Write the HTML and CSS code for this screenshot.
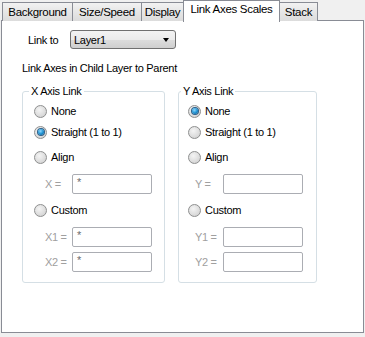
FILE: index.html
```html
<html>
<head>
    <meta charset="UTF-8">
    <title>Link Axes Scales</title>
    <link rel="stylesheet" href="styles.css">
</head>
<body>
    <div class="tabs">
        <div class="tab tab-bg">Background</div>
        <div class="tab tab-size">Size/Speed</div>
        <div class="tab tab-display">Display</div>
        <div class="tab tab-link selected">Link Axes Scales</div>
        <div class="tab tab-stack">Stack</div>
    </div>

    <div class="panel">
        <div class="link-row">
            <span class="link-label">Link to</span>
            <div class="combo">
                <span>Layer1</span>
                <span class="combo-arrow"></span>
            </div>
        </div>

        <div class="caption">Link Axes in Child Layer to Parent</div>

        <div class="groups">
            <fieldset class="group group-x">
                <legend>X Axis Link</legend>
                <div class="row r-none"><span class="radio"></span>None</div>
                <div class="row r-straight"><span class="radio checked"></span>Straight (1 to 1)</div>
                <div class="row r-align"><span class="radio"></span>Align</div>
                <div class="row r-field field"><span class="field-label">X =</span><div class="input">*</div></div>
                <div class="row r-custom"><span class="radio"></span>Custom</div>
                <div class="row r-f1 field"><span class="field-label">X1 =</span><div class="input">*</div></div>
                <div class="row r-f2 field"><span class="field-label">X2 =</span><div class="input">*</div></div>
            </fieldset>

            <fieldset class="group group-y">
                <legend>Y Axis Link</legend>
                <div class="row r-none"><span class="radio checked"></span>None</div>
                <div class="row r-straight"><span class="radio"></span>Straight (1 to 1)</div>
                <div class="row r-align"><span class="radio"></span>Align</div>
                <div class="row r-field field"><span class="field-label">Y =</span><div class="input"></div></div>
                <div class="row r-custom"><span class="radio"></span>Custom</div>
                <div class="row r-f1 field"><span class="field-label">Y1 =</span><div class="input"></div></div>
                <div class="row r-f2 field"><span class="field-label">Y2 =</span><div class="input"></div></div>
            </fieldset>
        </div>
    </div>
</body>
</html>
```

FILE: styles.css
```css
* {
    margin: 0;
    padding: 0;
    box-sizing: border-box;
}

body {
    font-family: Tahoma, 'Liberation Sans', Arial, sans-serif;
    font-size: 11px;
    letter-spacing: -0.3px;
    color: #000;
    background: #f0f0f0;
    width: 365px;
    height: 337px;
    overflow: hidden;
}

.tabs {
    display: flex;
    align-items: flex-end;
    height: 21px;
    padding-left: 2px;
    position: relative;
    z-index: 2;
}

.tab {
    height: 19px;
    line-height: 18px;
    font-size: 11.5px;
    text-align: center;
    border: 1px solid #898c95;
    border-bottom: none;
    margin-right: -1px;
    background: linear-gradient(#f2f2f2, #e6e6e6 50%, #dcdcdc);
}

.tab-bg { width: 71px; }
.tab-size { width: 70px; }
.tab-display { width: 43px; }
.tab-link { width: 97px; }
.tab-stack { width: 39px; }

.tab.selected {
    height: 22px;
    margin-bottom: -1px;
    line-height: 17px;
    background: #fff;
    position: relative;
    z-index: 3;
}

.panel {
    margin-left: 1px;
    width: 363px;
    height: 313px;
    margin-top: -1px;
    background: #fff;
    border: 1px solid #898c95;
    padding: 9px 0 0 20px;
}

.link-row {
    display: flex;
    align-items: center;
    height: 19px;
}

.link-label {
    width: 48px;
    padding-left: 6px;
}

.combo {
    width: 106px;
    height: 19px;
    border: 1px solid #707070;
    border-radius: 3px;
    background: linear-gradient(#f3f3f3, #ebebeb 50%, #dddddd 51%, #cfcfcf);
    display: flex;
    align-items: center;
    justify-content: space-between;
    padding: 0 6px 0 3px;
}

.combo-arrow {
    width: 0;
    height: 0;
    border-left: 3.5px solid transparent;
    border-right: 3.5px solid transparent;
    border-top: 4px solid #000;
}

.caption {
    margin-top: 12px;
    height: 14px;
    line-height: 14px;
}

.groups {
    display: flex;
    gap: 13px;
    margin-top: 9px;
}

.group {
    border: 1px solid #d5dfe5;
    border-radius: 3px;
    height: 199px;
    padding: 3px 0 0 11px;
}

.group-x {
    width: 143px;
}

.group-y {
    width: 139px;
    padding-left: 9px;
}

.group legend {
    margin-left: -5px;
    padding: 0 2px;
    line-height: 14px;
}

.group-y legend {
    margin-left: -7px;
}

.row {
    display: flex;
    align-items: center;
    height: 20px;
}

.r-straight { margin-top: 1px; }
.r-align { margin-top: 5px; }
.r-field { margin-top: 7px; }
.r-custom { margin-top: 6px; }
.r-f1 { margin-top: 7px; }
.r-f2 { margin-top: 5px; }

.radio {
    width: 13px;
    height: 13px;
    border-radius: 50%;
    border: 1px solid #8e8f8f;
    background: radial-gradient(circle at 40% 35%, #f4f4f4, #d8d8d8 70%, #c6c6c6);
    margin-right: 4px;
    position: relative;
}

.radio.checked::after {
    content: '';
    position: absolute;
    left: 2.5px;
    top: 2.5px;
    width: 6px;
    height: 6px;
    border-radius: 50%;
    background: radial-gradient(circle at 40% 35%, #8fd8ff, #1a8fd0 55%, #0b4f86);
    box-shadow: 0 0 0 1px #2b5f8a;
}

.field-label {
    color: #a0a0a0;
    width: 38px;
    padding-left: 11px;
}

.group-y .field-label {
    width: 35px;
    padding-left: 7px;
}

.input {
    width: 80px;
    height: 20px;
    border: 1px solid #abadb3;
    border-radius: 2px;
    background: #fff;
    padding: 1px 0 0 4px;
    line-height: 12px;
    color: #6d6d6d;
}
```
